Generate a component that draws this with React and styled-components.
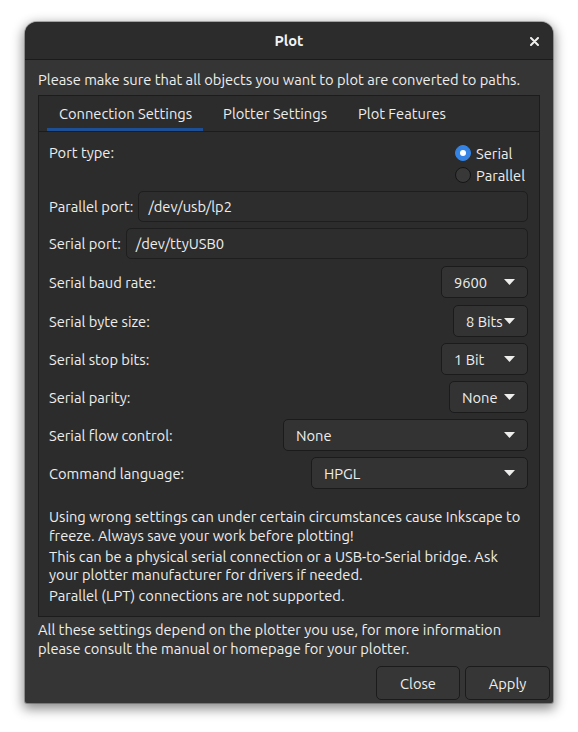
import React from "react";
import styled, { createGlobalStyle } from "styled-components";

const Global = createGlobalStyle`
  html, body { margin: 0; padding: 0; background: #ffffff; }
  body { font-family: "Ubuntu", "Lato", "Noto Sans", sans-serif; font-size: 14.7px; color: #eeeeec; }
  * { box-sizing: border-box; }
`;

const Page = styled.div`
  width: 578px;
  height: 732px;
  padding: 22px 25px 0 25px;
`;

const Window = styled.div`
  width: 528px;
  height: 681px;
  background: #353535;
  border-radius: 12px 12px 2px 2px;
  box-shadow: 0 4px 12px 2px rgba(0, 0, 0, 0.45), 0 0 0 1px rgba(0, 0, 0, 0.25);
  display: flex;
  flex-direction: column;
  overflow: hidden;
`;

const TitleBar = styled.div`
  height: 38px;
  flex: none;
  background: #2c2c2c;
  border-bottom: 1px solid #1b1b1b;
  display: flex;
  align-items: center;
  justify-content: center;
  position: relative;
`;

const Title = styled.div`
  font-weight: 700;
  font-size: 14.7px;
  color: #f2f2f2;
`;

const CloseBtn = styled.div`
  position: absolute;
  right: 13px;
  top: 13px;
  width: 12px;
  height: 12px;
  display: flex;
  align-items: center;
  justify-content: center;
`;

const Body = styled.div`
  flex: 1;
  display: flex;
  flex-direction: column;
  padding: 11px 13px 3px 13px;
`;

const Text = styled.div`
  line-height: 18.5px;
  color: #eeeeec;
`;

const Intro = styled(Text)`
  margin-bottom: 5.5px;
`;

const Notebook = styled.div`
  border: 1px solid #1c1c1c;
  background: #2c2c2c;
  height: 522px;
  display: flex;
  flex-direction: column;
`;

const TabBar = styled.div`
  height: 36px;
  display: flex;
  padding-left: 8px;
  gap: 8px;
  border-bottom: 1px solid #1c1c1c;
`;

const Tab = styled.div`
  display: flex;
  align-items: center;
  padding: 3px 11px 0 12px;
  height: 35px;
  border-bottom: 3px solid ${(p) => (p.$active ? "#1c4f96" : "transparent")};
  color: #eeeeec;
`;

const Content = styled.div`
  flex: 1;
  display: flex;
  flex-direction: column;
  padding: 10px 11px 0 10px;
`;

const Form = styled.div`
  display: flex;
  flex-direction: column;
  gap: 6px;
`;

const Row = styled.div`
  display: flex;
  align-items: ${(p) => (p.$top ? "flex-start" : "center")};
  justify-content: space-between;
  gap: 5px;
  margin-top: ${(p) => p.$mt || 0}px;
`;

const Label = styled.div`
  line-height: 19px;
  white-space: nowrap;
  padding-top: ${(p) => (p.$top ? "1px" : "0")};
`;

const RadioGroup = styled.div`
  display: flex;
  flex-direction: column;
  padding-right: 3px;
`;

const RadioRow = styled.div`
  display: flex;
  align-items: center;
  gap: 5px;
  height: 22px;
`;

const RadioCircle = styled.div`
  width: 16px;
  height: 16px;
  border-radius: 50%;
  display: flex;
  align-items: center;
  justify-content: center;
  background: ${(p) => (p.$on ? "#3584e4" : "#383838")};
  border: 1px solid ${(p) => (p.$on ? "#3584e4" : "#151515")};
  &::after {
    content: "";
    width: 6px;
    height: 6px;
    border-radius: 50%;
    background: #ffffff;
    display: ${(p) => (p.$on ? "block" : "none")};
  }
`;

const Entry = styled.div`
  flex: 1;
  height: 31px;
  border: 1px solid #1e1e1e;
  border-radius: 5px;
  background: #2d2d2d;
  display: flex;
  align-items: center;
  padding-left: 9px;
`;

const Combo = styled.div`
  width: ${(p) => p.$w}px;
  height: 32px;
  flex: none;
  border: 1px solid #1b1b1b;
  border-radius: 5px;
  background: #333333;
  display: flex;
  align-items: center;
  justify-content: space-between;
  padding: 0 12px 0 12px;
`;

const Notes = styled.div`
  margin-top: 19px;
  display: flex;
  flex-direction: column;
  gap: 2.5px;
`;

const Footer = styled(Text)`
  margin-top: 4px;
`;

const Buttons = styled.div`
  margin-top: auto;
  display: flex;
  justify-content: flex-end;
  gap: 5px;
  margin-right: -10px;
`;

const Button = styled.div`
  width: ${(p) => p.$w}px;
  height: 34px;
  border: 1px solid #1b1b1b;
  border-radius: 5px;
  background: #363636;
  display: flex;
  align-items: center;
  justify-content: center;
  color: #eeeeec;
`;

const Arrow = () => (
  <svg width="11" height="6" viewBox="0 0 11 6">
    <path d="M0 0 H11 L5.5 6 Z" fill="#eeeeec" />
  </svg>
);

const Dropdown = ({ w, value }) => (
  <Combo $w={w}>
    <span>{value}</span>
    <Arrow />
  </Combo>
);

export default function App() {
  return (
    <>
      <Global />
      <Page>
        <Window>
          <TitleBar>
            <Title>Plot</Title>
            <CloseBtn>
              <svg width="9" height="9" viewBox="0 0 9 9">
                <path d="M1 1 L8 8 M8 1 L1 8" stroke="#eeeeec" strokeWidth="2" strokeLinecap="round" />
              </svg>
            </CloseBtn>
          </TitleBar>
          <Body>
            <Intro>Please make sure that all objects you want to plot are converted to paths.</Intro>
            <Notebook>
              <TabBar>
                <Tab $active>Connection Settings</Tab>
                <Tab>Plotter Settings</Tab>
                <Tab>Plot Features</Tab>
              </TabBar>
              <Content>
                <Form>
                  <Row $top>
                    <Label $top>Port type:</Label>
                    <RadioGroup>
                      <RadioRow>
                        <RadioCircle $on />
                        <span>Serial</span>
                      </RadioRow>
                      <RadioRow>
                        <RadioCircle />
                        <span>Parallel</span>
                      </RadioRow>
                    </RadioGroup>
                  </Row>
                  <Row $mt={-1}>
                    <Label>Parallel port:</Label>
                    <Entry>/dev/usb/lp2</Entry>
                  </Row>
                  <Row>
                    <Label>Serial port:</Label>
                    <Entry>/dev/ttyUSB0</Entry>
                  </Row>
                  <Row $mt={1}>
                    <Label>Serial baud rate:</Label>
                    <Dropdown w={87} value="9600" />
                  </Row>
                  <Row $mt={1}>
                    <Label>Serial byte size:</Label>
                    <Dropdown w={75} value="8 Bits" />
                  </Row>
                  <Row>
                    <Label>Serial stop bits:</Label>
                    <Dropdown w={87} value="1 Bit" />
                  </Row>
                  <Row>
                    <Label>Serial parity:</Label>
                    <Dropdown w={79} value="None" />
                  </Row>
                  <Row>
                    <Label>Serial flow control:</Label>
                    <Dropdown w={245} value="None" />
                  </Row>
                  <Row>
                    <Label>Command language:</Label>
                    <Dropdown w={217} value="HPGL" />
                  </Row>
                </Form>
                <Notes>
                  <Text>
                    Using wrong settings can under certain circumstances cause Inkscape to
                    <br />
                    freeze. Always save your work before plotting!
                  </Text>
                  <Text>
                    This can be a physical serial connection or a USB-to-Serial bridge. Ask
                    <br />
                    your plotter manufacturer for drivers if needed.
                  </Text>
                  <Text>Parallel (LPT) connections are not supported.</Text>
                </Notes>
              </Content>
            </Notebook>
            <Footer>
              All these settings depend on the plotter you use, for more information
              <br />
              please consult the manual or homepage for your plotter.
            </Footer>
            <Buttons>
              <Button $w={84}>Close</Button>
              <Button $w={85}>Apply</Button>
            </Buttons>
          </Body>
        </Window>
      </Page>
    </>
  );
}
